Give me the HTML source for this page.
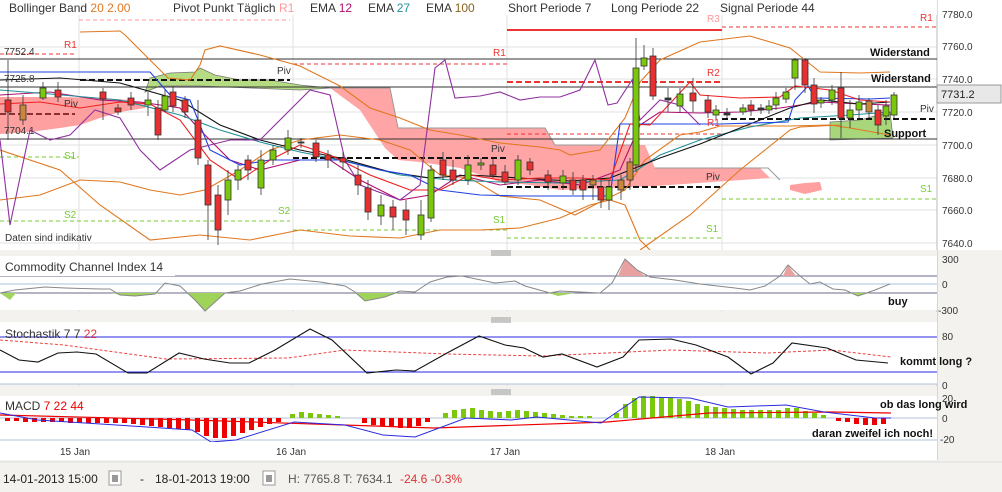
<!DOCTYPE html>
<html><head><meta charset="utf-8"><style>
html,body{margin:0;padding:0;background:#f3f2ef;}
svg{display:block;font-family:"Liberation Sans",sans-serif;}
</style></head><body>
<svg width="1002" height="492" viewBox="0 0 1002 492" xmlns="http://www.w3.org/2000/svg">
<rect x="0" y="0" width="1002" height="492" fill="#f3f2ef"/>
<rect x="0" y="0" width="937" height="250" fill="#fff"/>
<rect x="937" y="0" width="65" height="250" fill="#fff"/>
<g stroke="#e2e2e2" stroke-width="1">
<line x1="0" y1="14" x2="937" y2="14"/><line x1="0" y1="47" x2="937" y2="47"/><line x1="0" y1="79" x2="937" y2="79"/><line x1="0" y1="112" x2="937" y2="112"/><line x1="0" y1="145" x2="937" y2="145"/><line x1="0" y1="178" x2="937" y2="178"/><line x1="0" y1="210" x2="937" y2="210"/><line x1="0" y1="243" x2="937" y2="243"/>
<line x1="79" y1="0" x2="79" y2="450"/><line x1="293" y1="0" x2="293" y2="450"/><line x1="507" y1="0" x2="507" y2="450"/><line x1="722" y1="0" x2="722" y2="450"/>
</g>
<line x1="937" y1="0" x2="937" y2="460" stroke="#bbb"/>
<polygon points="0,97 60,97 100,98 130,100 145,104 145,108 120,112 100,118 80,125 60,128 30,132 0,134" fill="#ffa0a0"/>
<polygon points="330,88 390,88 398,128 545,128 555,145 645,145 655,168 760,168 770,178 655,186 560,190 530,185 500,182 460,168 420,162 398,160 385,148 360,110" fill="#ffa0a0" opacity="0.95"/>
<path d="M330,88 L390,88 L398,128 L545,128 L555,145 L640,145 M655,168 L768,168 L780,180" fill="none" stroke="#999"/>
<polygon points="790,185 805,183 820,182 822,190 805,194 790,190" fill="#ffa0a0"/>
<polygon points="150,78 170,73 195,72 200,68 215,75 240,80 270,80 300,85 330,88 300,90 250,88 200,86 160,86 145,92" fill="#b5dc82" stroke="#777" stroke-width="0.8"/>
<polygon points="830,122 860,120 890,112 893,138 830,140" fill="#a8d67a" stroke="#777" stroke-width="0.8"/>
<g stroke="#333" stroke-width="1">
<line x1="0" y1="59" x2="937" y2="59"/><line x1="0" y1="87" x2="937" y2="87"/><line x1="0" y1="139" x2="937" y2="139"/>
</g>
<g stroke="#111" stroke-width="2" stroke-dasharray="6,3">
<line x1="80" y1="80" x2="290" y2="80"/><line x1="293" y1="158" x2="507" y2="158"/><line x1="507" y1="187" x2="722" y2="187"/><line x1="722" y1="119" x2="937" y2="119"/>
</g>
<line x1="0" y1="114" x2="75" y2="114" stroke="#8a3030" stroke-width="2" stroke-dasharray="6,3"/>
<g stroke="#e33" stroke-width="1" stroke-dasharray="4,3">
<line x1="0" y1="54" x2="75" y2="54"/><line x1="293" y1="64" x2="507" y2="64"/><line x1="507" y1="134" x2="722" y2="134"/><line x1="722" y1="27" x2="937" y2="27"/><line x1="79" y1="20" x2="290" y2="20" stroke="#f99"/>
</g>
<line x1="507" y1="82" x2="722" y2="82" stroke="#e33" stroke-width="2" stroke-dasharray="6,3"/>
<line x1="507" y1="30" x2="722" y2="30" stroke="#e33" stroke-width="2"/>
<g stroke="#7c3" stroke-width="1" stroke-dasharray="4,3">
<line x1="0" y1="157" x2="79" y2="157"/><line x1="0" y1="221" x2="290" y2="221"/><line x1="293" y1="230" x2="507" y2="230"/><line x1="507" y1="238" x2="722" y2="238"/><line x1="722" y1="199" x2="937" y2="199"/>
</g>
<g fill="none" stroke="#e07820" stroke-width="1.1">
<path d="M80,32 L120,31 L125,35 L150,60 L168,78 L190,80 L200,65 L205,50 L220,46 L260,55 L300,66 L340,86 L370,108 L400,118 L430,130 L460,135 L500,143 L540,147 L560,150 L570,155 L600,150 L625,118 L640,82 L660,60 L700,42 L750,36 L790,48 L820,72 L860,73 L890,72"/>
<path d="M0,200 L40,195 L80,180 L120,182 L150,190 L180,195 L205,190 L240,170 L270,150 L300,140 L340,135 L380,140 L410,150 L440,175 L470,178 L500,196 L540,200 L575,215 L600,202 L625,190 L645,160 L680,135 L700,132 L720,126 L760,126 L790,126 L830,125 L850,128 L890,135"/>
<path d="M0,150 L60,170 L100,205 L150,240 L200,235 L250,240 L300,230 L350,236 L400,238 L440,230 L480,230 L520,228 L560,218 L590,205 L610,200 L625,205 L640,240 L650,250"/>
<path d="M640,250 L690,215 L740,170 L790,130 L800,127 L840,125"/>
</g>
<g fill="none" stroke-width="1.1">
<path d="M0,95 L50,92 L100,100 L140,102 L180,108 L200,130 L230,160 L260,170 L300,160 L330,160 L360,180 L400,200 L430,195 L460,175 L500,185 L540,180 L580,185 L620,170 L640,125 L660,112 L700,113 L740,112 L780,108 L820,102 L860,104 L890,105" stroke="#b01070"/>
<path d="M0,90 L50,94 L120,100 L180,115 L220,130 L260,142 L300,152 L350,162 L400,175 L450,180 L500,182 L560,183 L620,180 L640,168 L660,155 L700,140 L750,127 L800,118 L850,115 L890,112" stroke="#20909a"/>
<path d="M0,80 L60,78 L120,83 L180,100 L220,125 L260,140 L300,150 L340,158 L390,172 L430,178 L470,175 L520,178 L570,181 L610,178 L630,170 L660,158 L700,144 L750,124 L790,108 L820,100 L860,104 L890,102" stroke="#111"/>
<path d="M0,72 L150,72 L170,95 L190,100 L210,150 L240,165 L270,160 L300,160 L340,160 L380,170 L410,175 L440,190 L480,195 L520,196 L570,196 L610,196 L620,124 L720,124 L788,122 L795,100 L808,86 L815,98 L870,99 L890,98" stroke="#2040e0"/>
<path d="M0,104 L40,102 L80,108 L120,102 L150,104 L180,120 L210,160 L240,180 L270,160 L300,145 L330,155 L370,175 L410,190 L440,190 L470,175 L500,180 L540,178 L580,178 L610,180 L630,124 L650,125 L690,82 L700,95 L740,98 L780,97 L795,86 L830,90 L860,100 L890,102" stroke="#ee2020"/>
<path d="M0,140 L10,225 L30,130 L50,140 L70,135 L95,110 L120,118 L140,150 L160,170 L190,150 L230,140 L260,140 L290,110 L310,90 L330,95 L345,160 L360,185 L400,200 L420,185 L435,68 L445,60 L455,98 L480,96 L500,92 L520,100 L540,97 L560,97 L580,90 L595,60 L608,105 L617,103 L632,80 L640,120 L660,100 L680,105 L700,125" stroke="#9030a0"/>
</g>
<g stroke="#333" stroke-width="0.8">
<line x1="8" y1="60" x2="8" y2="140"/><rect x="5" y="100" width="6" height="12" fill="#e83030"/>
<line x1="23" y1="95" x2="23" y2="125"/><rect x="20" y="105" width="6" height="15" fill="#c8873a"/>
<line x1="43" y1="82" x2="43" y2="100"/><rect x="40" y="88" width="6" height="10" fill="#7ac70c"/>
<line x1="58" y1="82" x2="58" y2="102"/><rect x="55" y="90" width="6" height="7" fill="#e83030"/>
<line x1="103" y1="88" x2="103" y2="120"/><rect x="100" y="92" width="6" height="7" fill="#e83030"/>
<line x1="118" y1="104" x2="118" y2="115"/><rect x="115" y="108" width="6" height="4" fill="#e83030"/>
<line x1="131" y1="92" x2="131" y2="110"/><rect x="128" y="98" width="6" height="7" fill="#e83030"/>
<line x1="148" y1="92" x2="148" y2="116"/><rect x="145" y="100" width="6" height="5" fill="#7ac70c"/>
<line x1="158" y1="100" x2="158" y2="140"/><rect x="155" y="108" width="6" height="27" fill="#e83030"/>
<line x1="165" y1="90" x2="165" y2="112"/><rect x="162" y="96" width="6" height="14" fill="#7ac70c"/>
<line x1="173" y1="86" x2="173" y2="112"/><rect x="170" y="92" width="6" height="14" fill="#e83030"/>
<line x1="185" y1="96" x2="185" y2="118"/><rect x="182" y="100" width="6" height="12" fill="#e83030"/>
<line x1="198" y1="100" x2="198" y2="165"/><rect x="195" y="120" width="6" height="38" fill="#e83030"/>
<line x1="208" y1="160" x2="208" y2="240"/><rect x="205" y="165" width="6" height="40" fill="#e83030"/>
<line x1="218" y1="185" x2="218" y2="245"/><rect x="215" y="195" width="6" height="35" fill="#e83030"/>
<line x1="228" y1="170" x2="228" y2="215"/><rect x="225" y="180" width="6" height="20" fill="#7ac70c"/>
<line x1="238" y1="165" x2="238" y2="190"/><rect x="235" y="170" width="6" height="10" fill="#7ac70c"/>
<line x1="248" y1="155" x2="248" y2="180"/><rect x="245" y="160" width="6" height="10" fill="#e83030"/>
<line x1="261" y1="150" x2="261" y2="195"/><rect x="258" y="160" width="6" height="28" fill="#7ac70c"/>
<line x1="273" y1="145" x2="273" y2="165"/><rect x="270" y="150" width="6" height="10" fill="#7ac70c"/>
<line x1="288" y1="130" x2="288" y2="155"/><rect x="285" y="138" width="6" height="12" fill="#7ac70c"/>
<line x1="301" y1="138" x2="301" y2="148"/><rect x="298" y="142" width="6" height="1" fill="#333"/>
<line x1="316" y1="140" x2="316" y2="162"/><rect x="313" y="143" width="6" height="14" fill="#e83030"/>
<line x1="328" y1="150" x2="328" y2="168"/><rect x="325" y="155" width="6" height="5" fill="#e83030"/>
<line x1="343" y1="152" x2="343" y2="170"/><rect x="340" y="158" width="6" height="4" fill="#e83030"/>
<line x1="358" y1="165" x2="358" y2="195"/><rect x="355" y="175" width="6" height="10" fill="#e83030"/>
<line x1="368" y1="180" x2="368" y2="220"/><rect x="365" y="188" width="6" height="24" fill="#e83030"/>
<line x1="381" y1="195" x2="381" y2="225"/><rect x="378" y="205" width="6" height="11" fill="#7ac70c"/>
<line x1="393" y1="200" x2="393" y2="230"/><rect x="390" y="207" width="6" height="10" fill="#e83030"/>
<line x1="406" y1="200" x2="406" y2="235"/><rect x="403" y="210" width="6" height="10" fill="#e83030"/>
<line x1="421" y1="200" x2="421" y2="240"/><rect x="418" y="215" width="6" height="20" fill="#7ac70c"/>
<line x1="431" y1="165" x2="431" y2="222"/><rect x="428" y="170" width="6" height="48" fill="#7ac70c"/>
<line x1="443" y1="152" x2="443" y2="180"/><rect x="440" y="160" width="6" height="15" fill="#e83030"/>
<line x1="453" y1="160" x2="453" y2="185"/><rect x="450" y="170" width="6" height="10" fill="#e83030"/>
<line x1="468" y1="155" x2="468" y2="185"/><rect x="465" y="165" width="6" height="15" fill="#7ac70c"/>
<line x1="481" y1="158" x2="481" y2="170"/><rect x="478" y="163" width="6" height="2" fill="#7ac70c"/>
<line x1="493" y1="158" x2="493" y2="178"/><rect x="490" y="165" width="6" height="10" fill="#e83030"/>
<line x1="505" y1="165" x2="505" y2="185"/><rect x="502" y="172" width="6" height="10" fill="#e83030"/>
<line x1="518" y1="155" x2="518" y2="185"/><rect x="515" y="160" width="6" height="20" fill="#7ac70c"/>
<line x1="530" y1="158" x2="530" y2="175"/><rect x="527" y="162" width="6" height="8" fill="#e83030"/>
<line x1="548" y1="170" x2="548" y2="190"/><rect x="545" y="175" width="6" height="7" fill="#e83030"/>
<line x1="563" y1="170" x2="563" y2="190"/><rect x="560" y="176" width="6" height="7" fill="#7ac70c"/>
<line x1="573" y1="172" x2="573" y2="195"/><rect x="570" y="180" width="6" height="10" fill="#e83030"/>
<line x1="583" y1="175" x2="583" y2="200"/><rect x="580" y="180" width="6" height="10" fill="#e83030"/>
<line x1="593" y1="175" x2="593" y2="200"/><rect x="590" y="180" width="6" height="5" fill="#c8873a"/>
<line x1="601" y1="178" x2="601" y2="208"/><rect x="598" y="187" width="6" height="13" fill="#e83030"/>
<line x1="609" y1="180" x2="609" y2="210"/><rect x="606" y="187" width="6" height="13" fill="#7ac70c"/>
<line x1="621" y1="175" x2="621" y2="200"/><rect x="618" y="180" width="6" height="10" fill="#c8873a"/>
<line x1="630" y1="158" x2="630" y2="190"/><rect x="627" y="162" width="6" height="18" fill="#c8873a"/>
<line x1="636" y1="38" x2="636" y2="172"/><rect x="633" y="68" width="6" height="97" fill="#7ac70c"/>
<line x1="644" y1="45" x2="644" y2="70"/><rect x="641" y="58" width="6" height="8" fill="#7ac70c"/>
<line x1="653" y1="48" x2="653" y2="100"/><rect x="650" y="56" width="6" height="40" fill="#e83030"/>
<line x1="668" y1="88" x2="668" y2="112"/><rect x="665" y="98" width="6" height="2" fill="#333"/>
<line x1="680" y1="88" x2="680" y2="112"/><rect x="677" y="94" width="6" height="12" fill="#7ac70c"/>
<line x1="693" y1="78" x2="693" y2="112"/><rect x="690" y="93" width="6" height="8" fill="#e83030"/>
<line x1="708" y1="95" x2="708" y2="118"/><rect x="705" y="100" width="6" height="12" fill="#e83030"/>
<line x1="716" y1="105" x2="716" y2="120"/><rect x="713" y="110" width="6" height="5" fill="#7ac70c"/>
<line x1="727" y1="108" x2="727" y2="118"/><rect x="724" y="113" width="6" height="2" fill="#333"/>
<line x1="743" y1="104" x2="743" y2="115"/><rect x="740" y="108" width="6" height="4" fill="#7ac70c"/>
<line x1="751" y1="100" x2="751" y2="116"/><rect x="748" y="105" width="6" height="5" fill="#e83030"/>
<line x1="761" y1="104" x2="761" y2="114"/><rect x="758" y="108" width="6" height="2" fill="#333"/>
<line x1="769" y1="100" x2="769" y2="114"/><rect x="766" y="106" width="6" height="4" fill="#7ac70c"/>
<line x1="776" y1="92" x2="776" y2="110"/><rect x="773" y="98" width="6" height="7" fill="#7ac70c"/>
<line x1="786" y1="88" x2="786" y2="103"/><rect x="783" y="92" width="6" height="7" fill="#7ac70c"/>
<line x1="795" y1="58" x2="795" y2="90"/><rect x="792" y="60" width="6" height="18" fill="#7ac70c"/>
<line x1="805" y1="58" x2="805" y2="93"/><rect x="802" y="60" width="6" height="25" fill="#e83030"/>
<line x1="814" y1="78" x2="814" y2="113"/><rect x="811" y="85" width="6" height="19" fill="#e83030"/>
<line x1="821" y1="97" x2="821" y2="108"/><rect x="818" y="100" width="6" height="3" fill="#7ac70c"/>
<line x1="832" y1="85" x2="832" y2="105"/><rect x="829" y="90" width="6" height="10" fill="#7ac70c"/>
<line x1="841" y1="72" x2="841" y2="138"/><rect x="838" y="88" width="6" height="30" fill="#e83030"/>
<line x1="850" y1="100" x2="850" y2="128"/><rect x="847" y="110" width="6" height="8" fill="#7ac70c"/>
<line x1="859" y1="95" x2="859" y2="118"/><rect x="856" y="102" width="6" height="8" fill="#7ac70c"/>
<line x1="869" y1="98" x2="869" y2="118"/><rect x="866" y="101" width="6" height="11" fill="#c8873a"/>
<line x1="878" y1="105" x2="878" y2="135"/><rect x="875" y="110" width="6" height="15" fill="#e83030"/>
<line x1="886" y1="100" x2="886" y2="125"/><rect x="883" y="106" width="6" height="10" fill="#7ac70c"/>
<line x1="894" y1="92" x2="894" y2="118"/><rect x="891" y="95" width="6" height="20" fill="#7ac70c"/>
</g>
<rect x="0" y="0" width="937" height="15" fill="#fff" opacity="0.9"/>
<g font-size="12" fill="#333">
<text x="9" y="12">Bollinger Band <tspan fill="#e07820">20  2.00</tspan></text>
<text x="173" y="12">Pivot Punkt  Täglich</text><text x="279" y="12" fill="#f99">R1</text>
<text x="310" y="12">EMA <tspan fill="#b01070">12</tspan></text>
<text x="368" y="12">EMA <tspan fill="#20909a">27</tspan></text>
<text x="426" y="12">EMA <tspan fill="#8a6020">100</tspan></text>
<text x="508" y="12">Short Periode  7</text>
<text x="611" y="12">Long Periode  22</text>
<text x="720" y="12">Signal Periode  44</text>
</g>
<g font-size="10" fill="#e33">
<text x="64" y="48">R1</text><text x="493" y="56">R1</text><text x="707" y="76">R2</text><text x="707" y="126">R1</text><text x="707" y="22" fill="#f99">R3</text><text x="920" y="21">R1</text>
</g>
<g font-size="10" fill="#7c3">
<text x="64" y="159">S1</text><text x="64" y="218">S2</text><text x="278" y="214">S2</text><text x="493" y="223">S1</text><text x="706" y="232">S1</text><text x="920" y="192">S1</text>
</g>
<g font-size="10" fill="#333">
<text x="4" y="55">7752.4</text><text x="4" y="82">7725.8</text><text x="4" y="134">7704.1</text>
<text x="64" y="107">Piv</text><text x="277" y="74">Piv</text><text x="491" y="152">Piv</text><text x="706" y="180">Piv</text><text x="920" y="112">Piv</text>
<text x="5" y="241" font-size="10">Daten sind indikativ</text>
</g>
<g font-size="11" font-weight="bold" fill="#111">
<text x="870" y="56">Widerstand</text><text x="871" y="82">Widerstand</text><text x="884" y="137">Support</text>
</g>
<g font-size="10" fill="#333">
<text x="942" y="18">7780.0</text><text x="942" y="50">7760.0</text><text x="942" y="83">7740.0</text><text x="942" y="116">7720.0</text><text x="942" y="149">7700.0</text><text x="942" y="182">7680.0</text><text x="942" y="214">7660.0</text><text x="942" y="247">7640.0</text>
</g>
<rect x="937" y="85" width="64" height="18" fill="#e8e8e8" stroke="#999"/>
<text x="941" y="98" font-size="11" fill="#222">7731.2</text>
<rect x="0" y="250" width="937" height="6" fill="#f3f2ef"/>
<rect x="0" y="256" width="937" height="54" fill="#fff"/>
<g stroke="#999"><line x1="491" y1="251" x2="511" y2="251"/><line x1="491" y1="253" x2="511" y2="253"/><line x1="491" y1="255" x2="511" y2="255"/></g>
<line x1="0" y1="276" x2="937" y2="276" stroke="#6a6a8a"/><line x1="0" y1="284" x2="937" y2="284" stroke="#a8c0d8"/><line x1="0" y1="293" x2="937" y2="293" stroke="#6a6a8a"/>
<g fill="#9fd35a">
<polygon points="0,293 10,300 16,293"/><polygon points="112,293 120,295 135,296 155,294 158,293"/><polygon points="188,293 205,311 225,293"/><polygon points="355,293 365,301 385,297 398,293"/><polygon points="548,293 558,296 575,293"/><polygon points="850,293 858,296 870,293"/>
</g>
<g fill="#e8a0a0"><polygon points="618,276 625,259 637,270 645,276"/><polygon points="783,276 788,265 796,276"/></g>
<polyline fill="none" stroke="#888" stroke-width="1" points="0,293 15,290 25,289 45,287 65,288 100,289 110,289 120,295 135,296 155,294 165,283 180,286 195,300 205,311 225,293 240,291 262,284 290,279 320,282 345,286 355,292 365,301 385,297 400,291 415,292 430,282 447,277 462,276 495,283 515,281 525,286 550,293 560,291 580,292 600,293 612,283 625,259 637,270 650,277 675,280 700,284 735,288 750,290 765,286 780,276 788,265 800,276 810,284 820,282 833,289 845,290 858,296 875,290 890,284"/>
<rect x="0" y="257" width="175" height="19" fill="#fff"/>
<text x="5" y="271" font-size="12" fill="#333">Commodity Channel Index  14</text>
<text x="888" y="305" font-size="11" font-weight="bold" fill="#111">buy</text>
<g font-size="10" fill="#333"><text x="942" y="263">300</text><text x="942" y="288">0</text><text x="938" y="314">-300</text></g>
<rect x="0" y="312" width="937" height="10" fill="#f3f2ef"/>
<rect x="0" y="322" width="937" height="62" fill="#fff"/>
<g stroke="#999"><line x1="491" y1="318" x2="511" y2="318"/><line x1="491" y1="320" x2="511" y2="320"/><line x1="491" y1="322" x2="511" y2="322"/></g>
<line x1="0" y1="337" x2="937" y2="337" stroke="#2a2ae0"/><line x1="0" y1="372" x2="937" y2="372" stroke="#2a2ae0"/><line x1="0" y1="384" x2="937" y2="384" stroke="#b0c0d8"/>
<polyline fill="none" stroke="#ee4040" stroke-dasharray="3,2" points="0,340 64,345 166,359 288,358 345,350 447,354 543,356 671,350 767,353 831,350 891,357"/>
<polyline fill="none" stroke="#111" stroke-width="1.1" points="0,350 19,360 38,362 58,353 77,352 96,354 128,373 147,373 179,353 204,359 230,363 249,363 275,350 310,329 332,340 367,373 396,370 415,371 447,353 479,336 505,345 524,348 543,357 562,354 597,367 623,357 639,340 671,339 696,345 728,357 751,374 773,363 792,343 827,348 856,360 888,363"/>
<text x="5" y="338" font-size="12" fill="#333">Stochastik  7  7  <tspan fill="#e33">22</tspan></text>
<text x="900" y="365" font-size="11" font-weight="bold" fill="#111">kommt long ?</text>
<g font-size="10" fill="#333"><text x="942" y="340">80</text><text x="942" y="389">0</text></g>
<rect x="0" y="386" width="937" height="10" fill="#f3f2ef"/>
<rect x="0" y="396" width="937" height="46" fill="#fff"/>
<g stroke="#999"><line x1="491" y1="390" x2="511" y2="390"/><line x1="491" y1="392" x2="511" y2="392"/><line x1="491" y1="394" x2="511" y2="394"/></g>
<line x1="0" y1="418" x2="937" y2="418" stroke="#b0c0d8"/><line x1="0" y1="440" x2="937" y2="440" stroke="#b0c0d8"/>
<g fill="#e00">
<rect x="5" y="418" width="5" height="3"/><rect x="14" y="418" width="5" height="3"/><rect x="23" y="418" width="5" height="4"/><rect x="32" y="418" width="5" height="4"/><rect x="41" y="418" width="5" height="4"/><rect x="50" y="418" width="5" height="4"/><rect x="59" y="418" width="5" height="4"/><rect x="68" y="418" width="5" height="5"/><rect x="77" y="418" width="5" height="5"/><rect x="86" y="418" width="5" height="5"/><rect x="95" y="418" width="5" height="5"/><rect x="104" y="418" width="5" height="5"/><rect x="113" y="418" width="5" height="5"/><rect x="122" y="418" width="5" height="5"/><rect x="131" y="418" width="5" height="6"/><rect x="140" y="418" width="5" height="7"/><rect x="149" y="418" width="5" height="8"/>
<rect x="195" y="418" width="5" height="14"/><rect x="204" y="418" width="5" height="18"/><rect x="213" y="418" width="5" height="20"/><rect x="222" y="418" width="5" height="20"/><rect x="231" y="418" width="5" height="18"/><rect x="240" y="418" width="5" height="15"/><rect x="249" y="418" width="5" height="12"/><rect x="258" y="418" width="5" height="9"/><rect x="267" y="418" width="5" height="6"/><rect x="276" y="418" width="5" height="4"/>
<rect x="158" y="418" width="5" height="9"/><rect x="167" y="418" width="5" height="10"/><rect x="176" y="418" width="5" height="11"/><rect x="185" y="418" width="5" height="12"/>
<rect x="362" y="418" width="5" height="5"/><rect x="371" y="418" width="5" height="7"/><rect x="380" y="418" width="5" height="8"/><rect x="389" y="418" width="5" height="9"/><rect x="398" y="418" width="5" height="10"/><rect x="407" y="418" width="5" height="10"/><rect x="416" y="418" width="5" height="8"/><rect x="425" y="418" width="5" height="4"/>
<rect x="836" y="418" width="5" height="3"/><rect x="845" y="418" width="5" height="4"/><rect x="854" y="418" width="5" height="6"/><rect x="863" y="418" width="5" height="7"/><rect x="872" y="418" width="5" height="7"/><rect x="881" y="418" width="5" height="6"/>
</g>
<g fill="#7ac70c">
<rect x="290" y="414" width="5" height="4"/><rect x="299" y="412" width="5" height="6"/><rect x="308" y="413" width="5" height="5"/><rect x="317" y="414" width="5" height="4"/><rect x="326" y="415" width="5" height="3"/><rect x="335" y="416" width="5" height="2"/>
<rect x="443" y="413" width="5" height="5"/><rect x="452" y="410" width="5" height="8"/><rect x="461" y="409" width="5" height="9"/><rect x="470" y="408" width="5" height="10"/><rect x="479" y="410" width="5" height="8"/><rect x="488" y="411" width="5" height="7"/><rect x="497" y="412" width="5" height="6"/><rect x="506" y="411" width="5" height="7"/><rect x="515" y="410" width="5" height="8"/><rect x="524" y="411" width="5" height="7"/><rect x="533" y="412" width="5" height="6"/><rect x="542" y="413" width="5" height="5"/><rect x="551" y="414" width="5" height="4"/><rect x="560" y="415" width="5" height="3"/><rect x="569" y="416" width="5" height="2"/><rect x="578" y="416" width="5" height="2"/><rect x="587" y="416" width="5" height="2"/>
<rect x="614" y="413" width="5" height="5"/><rect x="623" y="404" width="5" height="14"/><rect x="632" y="398" width="5" height="20"/><rect x="641" y="396" width="5" height="22"/><rect x="650" y="396" width="5" height="22"/><rect x="659" y="397" width="5" height="21"/><rect x="668" y="398" width="5" height="20"/><rect x="677" y="399" width="5" height="19"/><rect x="686" y="401" width="5" height="17"/><rect x="695" y="404" width="5" height="14"/><rect x="704" y="406" width="5" height="12"/><rect x="713" y="407" width="5" height="11"/><rect x="722" y="408" width="5" height="10"/><rect x="731" y="409" width="5" height="9"/><rect x="740" y="410" width="5" height="8"/><rect x="749" y="410" width="5" height="8"/><rect x="758" y="410" width="5" height="8"/><rect x="767" y="410" width="5" height="8"/><rect x="776" y="410" width="5" height="8"/><rect x="785" y="408" width="5" height="10"/><rect x="794" y="408" width="5" height="10"/><rect x="803" y="411" width="5" height="7"/><rect x="812" y="413" width="5" height="5"/><rect x="821" y="415" width="5" height="3"/>
</g>
<polyline fill="none" stroke="#e00" stroke-width="1.2" points="0,415 192,420 434,428 607,422 709,413 831,412 891,413"/>
<polyline fill="none" stroke="#2a2ae0" stroke-width="1" points="0,413 38,420 147,427 192,430 211,442 236,440 294,422 345,425 383,435 415,437 466,418 511,420 537,417 601,423 639,397 690,398 728,407 786,405 824,412 875,418 891,418"/>
<text x="5" y="410" font-size="12" fill="#333">MACD  <tspan fill="#e00">7  22  44</tspan></text>
<text x="880" y="408" font-size="11" font-weight="bold" fill="#111">ob das long wird</text>
<text x="812" y="437" font-size="11" font-weight="bold" fill="#111">daran zweifel ich noch!</text>
<g font-size="10" fill="#333"><text x="942" y="402">20</text><text x="942" y="422">0</text><text x="940" y="443">-20</text></g>
<rect x="0" y="442" width="937" height="18" fill="#fff"/>
<g font-size="10" fill="#333"><text x="60" y="455">15 Jan</text><text x="276" y="455">16 Jan</text><text x="490" y="455">17 Jan</text><text x="705" y="455">18 Jan</text></g>
<line x1="0" y1="462" x2="1002" y2="462" stroke="#ddd"/>
<g font-size="12" fill="#222">
<text x="3" y="483">14-01-2013 15:00</text>
<text x="140" y="483">-</text>
<text x="155" y="483">18-01-2013 19:00</text>
<text x="288" y="483" fill="#555">H: 7765.8  T: 7634.1</text>
<text x="400" y="483" fill="#d33">-24.6  -0.3%</text>
</g>
<g fill="#fff" stroke="#999"><rect x="109" y="471" width="12" height="14"/><rect x="263" y="471" width="12" height="14"/></g>
<g fill="#999"><rect x="112" y="475" width="6" height="7"/><rect x="266" y="475" width="6" height="7"/></g>
</svg>
</body></html>
